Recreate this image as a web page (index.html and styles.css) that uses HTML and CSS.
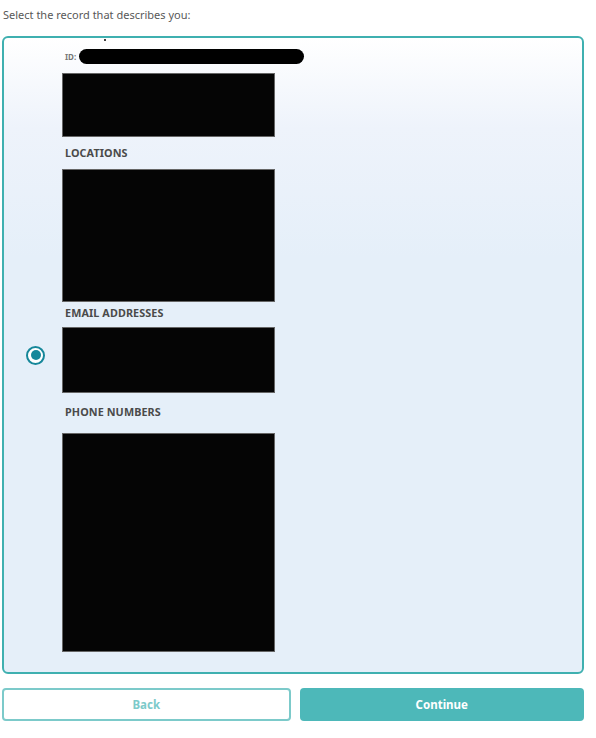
FILE: index.html
```html
<!DOCTYPE html>
<html lang="en">
<head>
  <meta charset="UTF-8">
  <title>Select record</title>
  <link rel="stylesheet" href="styles.css">
</head>
<body>
  <div class="page">
    <p class="prompt">Select the record that describes you:</p>

    <label class="record">
      <span class="radio"><span class="radio-dot"></span></span>
      <div class="record-body">
        <span class="speck"></span>
        <div class="id-row">
          <span class="id-label">ID:</span>
          <span class="id-value"></span>
        </div>
        <div class="redacted names"></div>

        <h3 class="section-title first">LOCATIONS</h3>
        <div class="redacted locations"></div>

        <h3 class="section-title email">EMAIL ADDRESSES</h3>
        <div class="redacted emails"></div>

        <h3 class="section-title phone">PHONE NUMBERS</h3>
        <div class="redacted phones"></div>
      </div>
    </label>

    <div class="actions">
      <button class="btn btn-back">Back</button>
      <button class="btn btn-continue">Continue</button>
    </div>
  </div>
</body>
</html>
```

FILE: styles.css
```css
body {
  margin: 0;
  background: #fff;
  font-family: "Noto Sans", "Open Sans", sans-serif;
  color: #555;
}

.page {
  width: 582px;
  margin-left: 2px;
}

.prompt {
  margin: 0;
  padding: 6px 0 0 1px;
  height: 18px;
  line-height: 18px;
  font-size: 11px;
  color: #585858;
  margin-bottom: 12px;
}

.record {
  display: flex;
  align-items: center;
  height: 638px;
  box-sizing: border-box;
  border: 2.5px solid #3fb0b0;
  border-radius: 6px;
  background: linear-gradient(to bottom, #ffffff 0px, #eef3fb 90px, #e5eff9 220px, #e5eff9 100%);
  cursor: pointer;
}

.radio {
  width: 15px;
  height: 15px;
  border: 2px solid #16879a;
  border-radius: 50%;
  margin-left: 22px;
  margin-right: 17px;
  display: flex;
  align-items: center;
  justify-content: center;
  background: #fff;
  flex-shrink: 0;
}

.radio-dot {
  width: 10px;
  height: 10px;
  border-radius: 50%;
  background: #16879a;
}

.record-body {
  align-self: flex-start;
  padding-top: 10px;
  position: relative;
}

.speck {
  position: absolute;
  left: 42px;
  top: 1px;
  width: 2px;
  height: 2px;
  background: #000;
  border-radius: 50%;
}

.id-row {
  display: flex;
  align-items: center;
  height: 16px;
  margin-bottom: 9px;
}

.id-label {
  font-size: 8px;
  font-weight: 700;
  color: #777;
  margin-left: 3px;
  margin-right: 3px;
}

.id-value {
  width: 225px;
  height: 15px;
  background: #000;
  border-radius: 8px;
}

.redacted {
  width: 213px;
  box-sizing: border-box;
  background: #050505;
  border: 1px solid #666;
}

.names { height: 64px; }
.locations { height: 133px; }
.emails { height: 66px; }
.phones { height: 219px; }

.section-title {
  margin: 0;
  padding-left: 3px;
  height: 16px;
  line-height: 16px;
  font-size: 10.8px;
  font-weight: 700;
  color: #4a4a4a;
  letter-spacing: 0.1px;
}

.section-title.first { margin: 8px 0 8px; }
.section-title.email { margin: 3px 0 6px; }
.section-title.phone { margin: 11px 0 13px; }

.actions {
  display: flex;
  gap: 9px;
  margin-top: 14px;
}

.btn {
  flex: 1;
  height: 33px;
  border-radius: 4px;
  font-family: inherit;
  font-size: 11.5px;
  font-weight: 700;
  cursor: pointer;
}

.btn-back {
  background: #fff;
  border: 2px solid #7ccaca;
  color: #7ccaca;
}

.btn-continue {
  background: #4db8b9;
  border: none;
  color: #fff;
}
```
